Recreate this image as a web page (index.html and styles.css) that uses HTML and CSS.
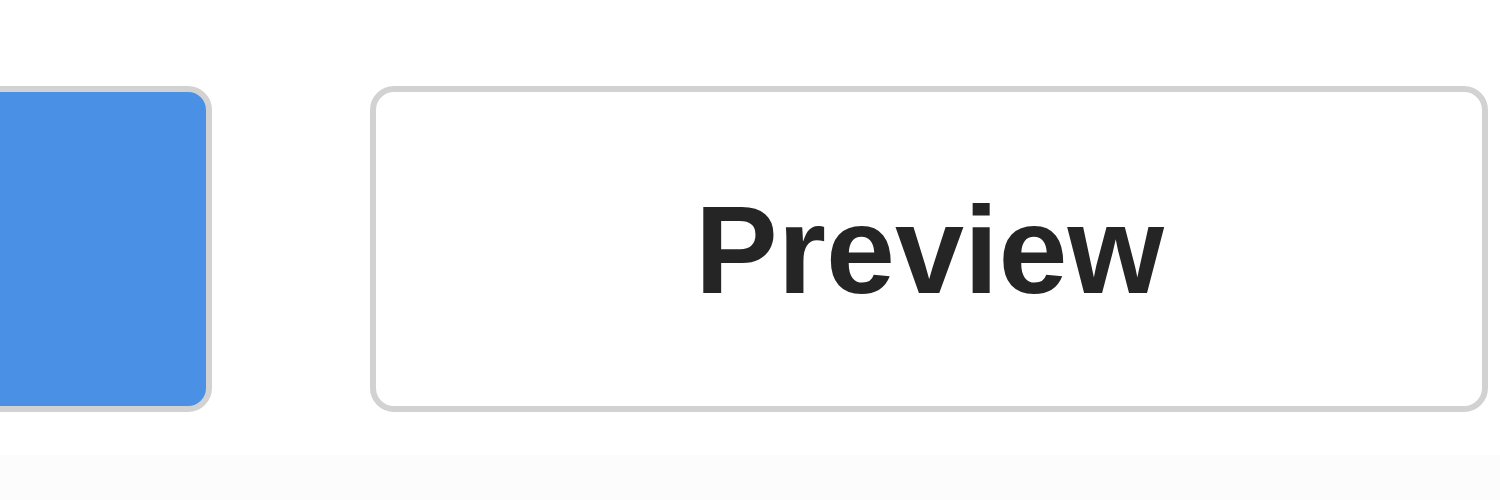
FILE: index.html
```html
<!DOCTYPE html>
<html>
<head>
<meta charset="utf-8">
<link rel="stylesheet" href="styles.css">
</head>
<body>
<div class="page">
  <div class="actions">
    <button class="btn btn-primary" aria-label="Submit"></button>
    <button class="btn btn-secondary">Preview</button>
  </div>
  <div class="footer-strip"></div>
</div>
</body>
</html>
```
FILE: styles.css
```css
html, body {
  margin: 0;
  padding: 0;
  background: #ffffff;
}
.page {
  width: 1500px;
  height: 500px;
  overflow: hidden;
  display: flex;
  flex-direction: column;
  font-family: "Liberation Sans", Arial, Helvetica, sans-serif;
}
.actions {
  display: flex;
  align-items: stretch;
  gap: 158px;
  padding-top: 86px;
  height: 326px;
}
.btn {
  box-sizing: border-box;
  height: 326px;
  border: 6px solid #d2d2d2;
  border-radius: 24px;
  margin: 0;
  padding: 0;
  font-family: inherit;
  cursor: pointer;
}
.btn-primary {
  width: 312px;
  margin-left: -100px;
  background: #4a90e4;
}
.btn-secondary {
  width: 1118px;
  background: #ffffff;
  color: #252525;
  font-weight: 700;
  font-size: 124px;
  line-height: 1;
  padding-left: 1px;
  padding-top: 2px;
}
.footer-strip {
  flex: 1;
  margin-top: 43px;
  background: #fcfcfc;
}
```
